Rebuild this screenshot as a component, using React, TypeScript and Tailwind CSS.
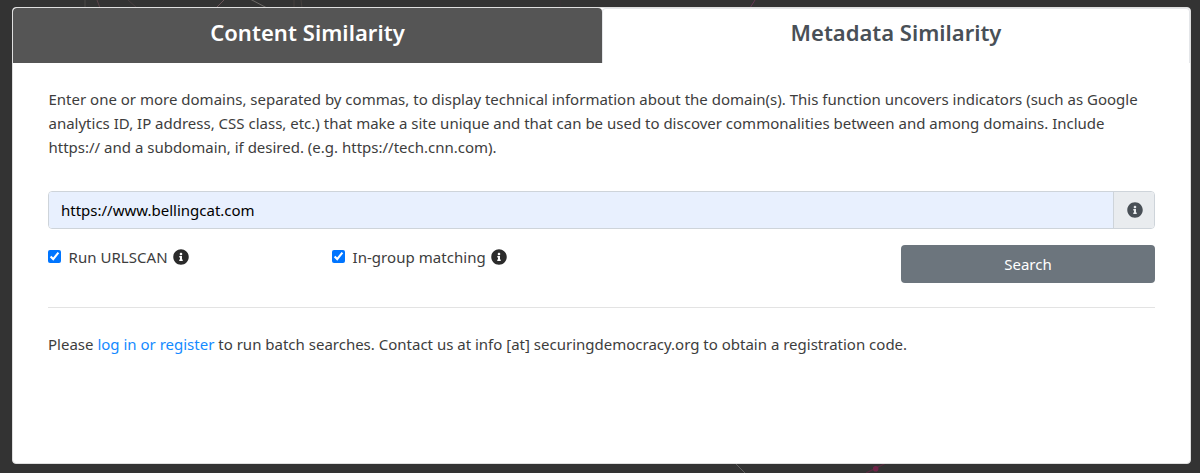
import { useState } from 'react';
import { FaInfoCircle } from 'react-icons/fa';

function NetworkBackdrop() {
  return (
    <svg className="absolute inset-0 h-full w-full" viewBox="0 0 1200 473" fill="none" aria-hidden="true">
      <path d="M85 0V8" stroke="#4d4a49" />
      <path d="M97 0L100 8" stroke="#5d454b" />
      <path d="M128 0L137 8" stroke="#483f41" />
      <path d="M224 0L216 8" stroke="#6b5559" />
      <path d="M250 -1L267 8" stroke="#6e6b67" />
      <path d="M294 0V8M301 0L302 8" stroke="#46413f" />
      <path d="M560 0V8" stroke="#3b3337" />
      <path d="M755 0L750 8" stroke="#653854" />
      <path d="M735 463L745 473" stroke="#606060" />
      <path d="M866 473L886 463" stroke="#582b40" strokeWidth="1.3" />
      <circle cx="875.7" cy="468.8" r="2.8" fill="#702448" />
    </svg>
  );
}

function Option({ label }: { label: string }) {
  const [checked, setChecked] = useState(true);
  return (
    <label className="flex h-6 w-[284px] items-center">
      <input
        type="checkbox"
        checked={checked}
        onChange={() => setChecked(!checked)}
        className="mr-[7.5px] mb-0.5 size-[13px] accent-[#0075ff]"
      />
      <span className="tracking-[0.05px]">{label}</span>
      <FaInfoCircle className="mb-px ml-[5px] size-4 text-[#2b2b2b]" />
    </label>
  );
}

export default function App() {
  const [query, setQuery] = useState('https://www.bellingcat.com');
  return (
    <div className="relative h-[473px] overflow-hidden bg-[#333333] pt-[7px] pr-[9px] pl-3 font-['Noto_Sans','Open_Sans',sans-serif] text-[15px] leading-6 text-[#3d3d3d]">
      <NetworkBackdrop />
      <main className="relative h-[457px] overflow-hidden rounded border border-[#dfdfdf] bg-white">
        <nav className="flex h-[55px] text-[22px] leading-[26px] font-semibold">
          <button className="w-[589px] rounded-t bg-[#555555] pb-[7px] tracking-[0.06px] text-white">Content Similarity</button>
          <button className="flex-1 rounded-t border-t border-r border-l border-[#e4e6e9] pb-2 text-[#495057]">
            Metadata Similarity
          </button>
        </nav>
        <section className="pt-6 pr-[35px] pl-[35px]">
          <p className="pl-[0.5px] whitespace-nowrap">
            Enter one or more domains, separated by commas, to display technical information about the domain(s). This function uncovers indicators (such as Google
            <br />
            analytics ID, IP address, CSS class, etc.) that make a site unique and that can be used to discover commonalities between and among domains. Include
            <br />
            https:// and a subdomain, if desired. (e.g. https://tech.cnn.com).
          </p>
          <div className="mt-8 flex h-[38px] overflow-hidden rounded border border-[#ced4da]">
            <input
              value={query}
              onChange={(e) => setQuery(e.target.value)}
              className="flex-1 bg-[#e8f0fe] px-3 text-black outline-none"
            />
            <span className="flex w-[41px] items-center justify-center border-l border-[#ced4da] bg-[#e9ecef] pl-px text-[#495057]">
              <FaInfoCircle className="size-4" />
            </span>
          </div>
          <div className="mt-4 flex">
            <Option label="Run URLSCAN" />
            <Option label="In-group matching" />
            <button className="ml-auto h-[38px] w-[254px] rounded bg-[#6c757d] text-white">Search</button>
          </div>
          <hr className="mt-6 border-[#e3e3e3]" />
          <p className="mt-6 whitespace-nowrap">
            Please{' '}
            <a href="#login" className="text-[#148aff]">
              log in or register
            </a>{' '}
            to run batch searches. Contact us at info [at] securingdemocracy.org to obtain a registration code.
          </p>
        </section>
      </main>
    </div>
  );
}
